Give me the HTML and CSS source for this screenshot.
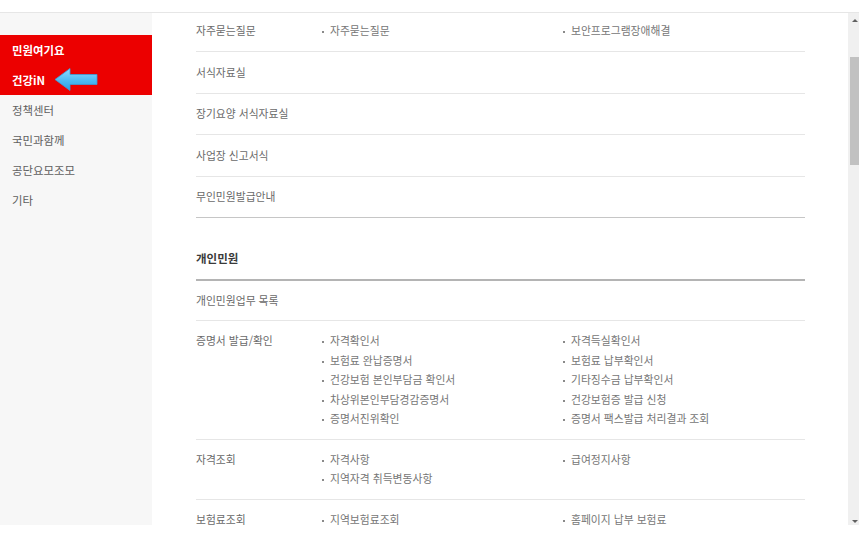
FILE: index.html
```html
<!DOCTYPE html>
<html lang="ko">
<head>
<meta charset="utf-8">
<title>민원여기요</title>
<link rel="stylesheet" href="styles.css">
</head>
<body>
<div class="topbar"></div>
<div class="frame">
  <aside class="sidebar">
    <div class="nav-group">
      <div class="nav-item">민원여기요</div>
      <div class="nav-item has-arrow">건강iN
        <svg class="arrow" width="44" height="25" viewBox="0 0 44 25" aria-hidden="true">
          <defs>
            <linearGradient id="ag" x1="0" y1="0" x2="0" y2="1">
              <stop offset="0" stop-color="#8fdcff"/>
              <stop offset="0.55" stop-color="#4dbaf3"/>
              <stop offset="1" stop-color="#2f9ee0"/>
            </linearGradient>
          </defs>
          <path d="M1 12.5 L16 1.5 L16 7.5 L43 7.5 L43 17.5 L16 17.5 L16 23.5 Z" fill="url(#ag)" stroke="#3a9edb" stroke-width="0.8" stroke-linejoin="round"/>
        </svg>
      </div>
    </div>
    <div class="nav-item">정책센터</div>
    <div class="nav-item">국민과함께</div>
    <div class="nav-item">공단요모조모</div>
    <div class="nav-item">기타</div>
  </aside>

  <main class="content">
    <div class="row row-first">
      <div class="label">자주묻는질문</div>
      <ul class="items"><li>자주묻는질문</li></ul>
      <ul class="items"><li>보안프로그램장애해결</li></ul>
    </div>
    <div class="row"><div class="label">서식자료실</div></div>
    <div class="row"><div class="label">장기요양 서식자료실</div></div>
    <div class="row"><div class="label">사업장 신고서식</div></div>
    <div class="row row-end"><div class="label">무인민원발급안내</div></div>

    <h2 class="section-title">개인민원</h2>

    <div class="row row-list"><div class="label">개인민원업무 목록</div></div>
    <div class="row row-list">
      <div class="label">증명서 발급/확인</div>
      <ul class="items">
        <li>자격확인서</li>
        <li>보험료 완납증명서</li>
        <li>건강보험 본인부담금 확인서</li>
        <li>차상위본인부담경감증명서</li>
        <li>증명서진위확인</li>
      </ul>
      <ul class="items">
        <li>자격득실확인서</li>
        <li>보험료 납부확인서</li>
        <li>기타징수금 납부확인서</li>
        <li>건강보험증 발급 신청</li>
        <li>증명서 팩스발급 처리결과 조회</li>
      </ul>
    </div>
    <div class="row row-list">
      <div class="label">자격조회</div>
      <ul class="items">
        <li>자격사항</li>
        <li>지역자격 취득변동사항</li>
      </ul>
      <ul class="items"><li>급여정지사항</li></ul>
    </div>
    <div class="row row-list">
      <div class="label">보험료조회</div>
      <ul class="items"><li>지역보험료조회</li></ul>
      <ul class="items"><li>홈페이지 납부 보험료</li></ul>
    </div>
  </main>

  <div class="scrollbar">
    <div class="sb-btn sb-up"></div>
    <div class="sb-track"><div class="sb-thumb"></div></div>
    <div class="sb-btn sb-down"></div>
  </div>
</div>
</body>
</html>
```

FILE: styles.css
```css
* { box-sizing: border-box; }

html, body {
  margin: 0;
  padding: 0;
  background: #ffffff;
}

body {
  width: 859px;
  height: 546px;
  overflow: hidden;
  font-family: "Noto Sans CJK KR", "Noto Sans", sans-serif;
  font-size: 10.8px;
  color: #6a6a6a;
}

.topbar {
  height: 13px;
  border-bottom: 1px solid #e6e6e6;
}

.frame {
  display: flex;
  height: 512px;
  overflow: hidden;
}

/* sidebar */
.sidebar {
  width: 152px;
  flex: none;
  background: #f7f7f7;
  padding-top: 22px;
}

.nav-group {
  background: #ec0000;
}

.nav-item {
  position: relative;
  height: 30px;
  line-height: 30px;
  padding-left: 12px;
  font-size: 11.4px;
  color: #606060;
}

.nav-group .nav-item {
  color: #ffffff;
  font-weight: 700;
}

.arrow {
  position: absolute;
  left: 54px;
  top: 2px;
}

/* content */
.content {
  flex: 1;
  min-width: 0;
  padding: 0 43px 0 44px;
  overflow: hidden;
}

.row {
  display: grid;
  grid-template-columns: 126px 241px 1fr;
  padding: 10.5px 0 11px;
  line-height: 19px;
  border-bottom: 1px solid #e6e6e6;
}

.row-first { padding-top: 8px; }

.row-end { border-bottom-color: #c6c6c6; }

.row-list {
  padding: 10px 0;
  line-height: 19.5px;
}

.label {
  color: #6a6a6a;
}

.items {
  list-style: none;
  margin: 0;
  padding: 0;
  color: #767676;
}

.items li::before {
  content: "";
  display: inline-block;
  width: 2px;
  height: 2px;
  margin-right: 6px;
  background: #8a8a8a;
  vertical-align: middle;
}

.section-title {
  margin: 0;
  padding: 31px 0 10.5px;
  line-height: 19px;
  font-size: 11.5px;
  font-weight: 700;
  color: #3a3a3a;
  border-bottom: 2px solid #b4b4b4;
}

/* scrollbar */
.scrollbar {
  width: 11px;
  flex: none;
  background: #f0f0f0;
  display: flex;
  flex-direction: column;
}

.sb-btn {
  display: flex;
  align-items: center;
  padding-left: 4px;
}

.sb-up { height: 14px; }
.sb-down { height: 7px; }

.sb-up::before {
  content: "";
  border-left: 3px solid transparent;
  border-right: 3px solid transparent;
  border-bottom: 3px solid #606060;
}

.sb-down::before {
  content: "";
  border-left: 3px solid transparent;
  border-right: 3px solid transparent;
  border-top: 3px solid #606060;
}

.sb-track {
  flex: 1;
  padding: 30px 0 0 2px;
}

.sb-thumb {
  height: 108px;
  background: #c1c1c1;
}
```
